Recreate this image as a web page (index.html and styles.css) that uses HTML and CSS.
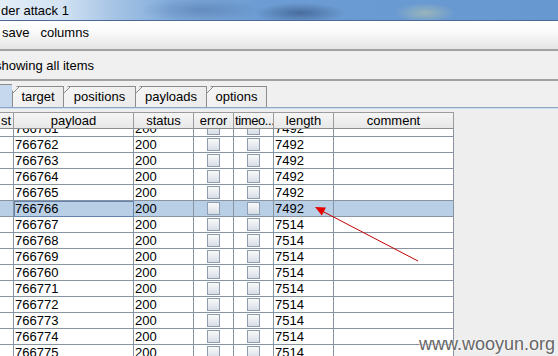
FILE: index.html
```html
<!DOCTYPE html>
<html>
<head>
<meta charset="utf-8">
<link rel="stylesheet" href="styles.css">
</head>
<body>
<div class="titlebar"><span class="title">der attack 1</span></div>
<div class="menubar"><span>save</span><span>columns</span></div>
<div class="sep"></div>
<div class="filter"><span class="filter-text">showing all items</span></div>
<div class="sep"></div>
<div class="tabs">
  <div class="tab tab-sel"></div>
  <div class="tab tab-target">target</div>
  <div class="tab tab-positions">positions</div>
  <div class="tab tab-payloads">payloads</div>
  <div class="tab tab-options">options</div>
</div>
<div class="tabline"></div>
<div class="panel">
  <div class="table">
    <div class="thead">
      <div class="th th-first">st</div>
      <div class="th">payload</div>
      <div class="th">status</div>
      <div class="th">error</div>
      <div class="th th-clip">timeo...</div>
      <div class="th">length</div>
      <div class="th">comment</div>
    </div>
    <div class="tbody">
      <div class="rows">
        <div class="tr"><div class="td"></div><div class="td">766761</div><div class="td">200</div><div class="td chk"><span class="box"></span></div><div class="td chk"><span class="box"></span></div><div class="td">7492</div><div class="td"></div></div>
        <div class="tr"><div class="td"></div><div class="td">766762</div><div class="td">200</div><div class="td chk"><span class="box"></span></div><div class="td chk"><span class="box"></span></div><div class="td">7492</div><div class="td"></div></div>
        <div class="tr"><div class="td"></div><div class="td">766763</div><div class="td">200</div><div class="td chk"><span class="box"></span></div><div class="td chk"><span class="box"></span></div><div class="td">7492</div><div class="td"></div></div>
        <div class="tr"><div class="td"></div><div class="td">766764</div><div class="td">200</div><div class="td chk"><span class="box"></span></div><div class="td chk"><span class="box"></span></div><div class="td">7492</div><div class="td"></div></div>
        <div class="tr"><div class="td"></div><div class="td">766765</div><div class="td">200</div><div class="td chk"><span class="box"></span></div><div class="td chk"><span class="box"></span></div><div class="td">7492</div><div class="td"></div></div>
        <div class="tr sel"><div class="td"></div><div class="td focus">766766</div><div class="td">200</div><div class="td chk"><span class="box"></span></div><div class="td chk"><span class="box"></span></div><div class="td">7492</div><div class="td"></div></div>
        <div class="tr"><div class="td"></div><div class="td">766767</div><div class="td">200</div><div class="td chk"><span class="box"></span></div><div class="td chk"><span class="box"></span></div><div class="td">7514</div><div class="td"></div></div>
        <div class="tr"><div class="td"></div><div class="td">766768</div><div class="td">200</div><div class="td chk"><span class="box"></span></div><div class="td chk"><span class="box"></span></div><div class="td">7514</div><div class="td"></div></div>
        <div class="tr"><div class="td"></div><div class="td">766769</div><div class="td">200</div><div class="td chk"><span class="box"></span></div><div class="td chk"><span class="box"></span></div><div class="td">7514</div><div class="td"></div></div>
        <div class="tr"><div class="td"></div><div class="td">766760</div><div class="td">200</div><div class="td chk"><span class="box"></span></div><div class="td chk"><span class="box"></span></div><div class="td">7514</div><div class="td"></div></div>
        <div class="tr"><div class="td"></div><div class="td">766771</div><div class="td">200</div><div class="td chk"><span class="box"></span></div><div class="td chk"><span class="box"></span></div><div class="td">7514</div><div class="td"></div></div>
        <div class="tr"><div class="td"></div><div class="td">766772</div><div class="td">200</div><div class="td chk"><span class="box"></span></div><div class="td chk"><span class="box"></span></div><div class="td">7514</div><div class="td"></div></div>
        <div class="tr"><div class="td"></div><div class="td">766773</div><div class="td">200</div><div class="td chk"><span class="box"></span></div><div class="td chk"><span class="box"></span></div><div class="td">7514</div><div class="td"></div></div>
        <div class="tr"><div class="td"></div><div class="td">766774</div><div class="td">200</div><div class="td chk"><span class="box"></span></div><div class="td chk"><span class="box"></span></div><div class="td">7514</div><div class="td"></div></div>
        <div class="tr"><div class="td"></div><div class="td">766775</div><div class="td">200</div><div class="td chk"><span class="box"></span></div><div class="td chk"><span class="box"></span></div><div class="td">7514</div><div class="td"></div></div>
      </div>
    </div>
  </div>
</div>
<svg class="arrow" width="558" height="356" viewBox="0 0 558 356">
  <line x1="418" y1="261" x2="322" y2="211" stroke="#c40000" stroke-width="1"/>
  <polygon points="315,207 326,207.6 321.8,215.6" fill="#e60000"/>
</svg>
<div class="wm">www.wooyun.org</div>
</body>
</html>
```

FILE: styles.css
```css
* { box-sizing: border-box; }
html, body { margin: 0; padding: 0; }
body {
  width: 558px;
  height: 356px;
  overflow: hidden;
  position: relative;
  background: #eeeeee;
  font-family: "Liberation Sans", Arial, sans-serif;
  font-size: 13px;
  color: #000;
}
.titlebar {
  height: 21px;
  border-bottom: 1px solid #4a6a92;
  padding: 3px 0 0 1px;
  line-height: 15px;
  background:
    radial-gradient(ellipse 45px 10px at 300px 13px, rgba(30,50,90,0.45), rgba(30,50,90,0)),
    radial-gradient(ellipse 30px 10px at 425px 13px, rgba(210,215,160,0.45), rgba(210,215,160,0)),
    radial-gradient(ellipse 60px 12px at 200px 10px, rgba(60,90,140,0.35), rgba(60,90,140,0)),
    linear-gradient(to right, #e2edf8 0, #d3e3f3 60px, #a9c6e6 110px, #82acdb 170px, #6c9cd3 260px, #6798d0 558px);
}
.title { white-space: nowrap; }
.menubar {
  height: 28px;
  display: flex;
  gap: 11px;
  padding: 4px 0 0 2px;
  line-height: 15px;
  background: linear-gradient(#ffffff 0, #fbfbfb 35%, #ececec 80%, #e4e4e4 100%);
}
.sep { height: 2px; background: #a2a2a2; }
.filter {
  height: 28px;
  padding: 7px 0 0 0;
  line-height: 15px;
  background: #f0f0f0;
  overflow: hidden;
  white-space: nowrap;
}
.filter-text { margin-left: -5px; }
.tabs {
  height: 26px;
  display: flex;
  align-items: flex-end;
  background: #f0f0f0;
}
.tab {
  height: 21px;
  border: 1px solid #8c8c8c;
  border-bottom: none;
  padding-top: 2px;
  line-height: 15px;
  text-align: center;
  white-space: nowrap;
  background-origin: border-box;
  background: linear-gradient(135deg, rgba(0,0,0,0) 0, rgba(0,0,0,0) 3.6px, #8c8c8c 3.6px, #8c8c8c 4.6px, #f4f4f4 4.6px, #ebebeb 100%);
  clip-path: polygon(0 5px, 5px 0, 100% 0, 100% 100%, 0 100%);
}
.tab-sel {
  width: 12px;
  height: 23px;
  border: none;
  border-top: 1px solid #8c8c8c;
  background: #c5d8ee;
  clip-path: none;
}
.tab-target { width: 52px; }
.tab-positions { width: 73px; margin-left: -1px; }
.tab-payloads { width: 72px; margin-left: -1px; }
.tab-options { width: 61px; margin-left: -1px; }
.tabline {
  height: 2px;
  border-top: 1px solid #8aa5c7;
  background: #cfdcec;
}
.panel {
  padding-top: 3px;
  display: flex;
  background: #eeeeee;
}
.table { width: 454px; }
.thead, .tr {
  display: grid;
  grid-template-columns: 14px 120px 60px 40px 40px 60px 120px;
}
.thead { height: 17px; }
.th {
  border-top: 1px solid #9b9b9b;
  border-bottom: 1px solid #8d8d8d;
  border-right: 1px solid #9b9b9b;
  background: linear-gradient(#f5f5f5, #e8e8e8);
  line-height: 15px;
  text-align: center;
  white-space: nowrap;
  overflow: hidden;
}
.th-first { text-align: left; padding-left: 1px; }
.th-clip { text-align: left; padding-left: 1px; letter-spacing: -0.4px; }
.tbody {
  height: 227px;
  overflow: hidden;
}
.rows { margin-top: -8px; }
.tr { height: 16px; }
.td {
  border-right: 1px solid #8894a2;
  border-bottom: 1px solid #8894a2;
  background: #ffffff;
  line-height: 15px;
  padding-left: 1px;
  white-space: nowrap;
  overflow: hidden;
}
.tr.sel .td { background: #b9cfe6; }
.tr.sel .focus {
  border-color: #6583ad;
  box-shadow: inset 1px 1px 0 #6583ad;
}
.chk {
  display: flex;
  justify-content: center;
  align-items: center;
  padding-left: 0;
}
.box {
  display: block;
  width: 13px;
  height: 13px;
  border: 1px solid #8e9db0;
  background: linear-gradient(#f8f8f8, #e6eaef 60%, #d6dde6);
}
.arrow {
  position: absolute;
  left: 0;
  top: 0;
  pointer-events: none;
}
.wm {
  position: absolute;
  right: 3px;
  top: 334px;
  font-size: 18px;
  line-height: 21px;
  color: #656565;
  text-shadow: 0 0 2px #ffffff, 0 0 1px #ffffff;
  white-space: nowrap;
}
```
